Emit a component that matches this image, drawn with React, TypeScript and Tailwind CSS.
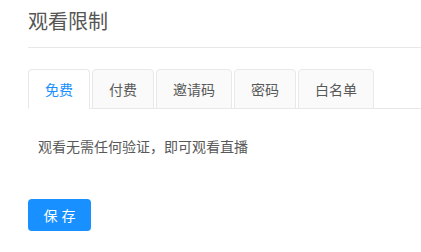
const tabs = ["免费", "付费", "邀请码", "密码", "白名单"];

export default function App() {
  const active = 0;

  return (
    <main
      className="w-full bg-white pl-[28px] pt-[7px]"
      style={{ fontFamily: '"Noto Sans CJK SC", "Noto Sans", sans-serif' }}
    >
      <h1 className="border-b border-[#e8e8e8] pb-[12px] text-[20px] leading-[28px] font-normal text-[#555]">
        观看限制
      </h1>

      {/* 标签 */}
      <div className="mt-[21px] flex gap-[2px] border-b border-[#e8e8e8]">
        {tabs.map((t, i) => (
          <div
            key={t}
            className={
              "-mb-px flex h-[40px] items-center rounded-t border border-[#e8e8e8] px-[16px] text-[14px] " +
              (i === active
                ? "border-b-white bg-white text-[#1890ff]"
                : "bg-[#fafafa] text-[#595959]")
            }
          >
            {t}
          </div>
        ))}
      </div>

      <p className="mt-[26px] pl-[10px] text-[14px] leading-[22px] text-[#595959]">
        观看无需任何验证，即可观看直播
      </p>

      <button className="mt-[42px] flex h-[32px] w-[63px] items-center justify-center rounded bg-[#1890ff] text-[14px] text-white shadow-[0_2px_0_rgba(0,0,0,0.045)]">
        <span className="-mr-[4px] tracking-[4px]">保存</span>
      </button>
    </main>
  );
}
